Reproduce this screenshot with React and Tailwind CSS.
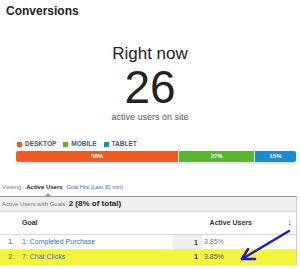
import React from 'react';

const App = () => {
  return (
    <div className="relative w-[300px] h-[269px] overflow-hidden bg-white font-['Liberation_Sans',Arial,sans-serif] text-[#333]">
      <div className="pl-[6px] pt-[4px] text-[12px] leading-[14px] font-bold text-[#222]">Conversions</div>

      <div className="mt-[26px] text-center text-[17px] leading-[20px] text-[#222]">Right now</div>
      <div className="mt-[1px] text-center text-[46px] leading-[44px] text-[#222]">26</div>
      <div className="mt-[3px] text-center text-[9px] leading-[11px] text-[#555]">active users on site</div>

      <div className="mt-[17px] flex items-center gap-[7px] pl-[17px] text-[6.5px] leading-[8px] font-bold text-[#3b5b85]">
        <span className="flex items-center gap-[3px]"><span className="w-[5px] h-[5px] bg-[#ef5b20]" />DESKTOP</span>
        <span className="flex items-center gap-[3px]"><span className="w-[5px] h-[5px] bg-[#5cb531]" />MOBILE</span>
        <span className="flex items-center gap-[3px]"><span className="w-[5px] h-[5px] bg-[#198bd1]" />TABLET</span>
      </div>

      <div className="mt-[3px] ml-[16px] w-[280px] h-[11px] flex rounded-[2px] overflow-hidden shadow-[0_2px_2px_rgba(0,0,0,0.12)] text-[6px] font-bold text-white leading-[11px]">
        <div className="w-[58%] bg-[#ef5b20] text-center">58%</div>
        <div className="w-[27%] bg-[#5cb531] text-center border-l border-[#e8f4e0]">27%</div>
        <div className="w-[15%] bg-[#198bd1] text-center border-l border-white">15%</div>
      </div>

      <div className="mt-[21px] pl-[2px] text-[5.5px] leading-[9px] text-[#777]">
        Viewing: <span className="ml-[2px] text-[6px] font-bold text-[#222]">Active Users</span>
        <span className="ml-[4px] text-[#3a6fb0]">Goal Hits (Last 30 min)</span>
      </div>

      <div className="relative mt-[4px] w-[297px] h-[15px] bg-[#eeeeee] border-t border-[#999] border-r border-r-[#ccc] pl-[2px] text-[6px] leading-[14px] text-[#777]">
        <span className="absolute -top-[4px] left-[44px] w-0 h-0 border-l-[4px] border-r-[4px] border-b-[4px] border-l-transparent border-r-transparent border-b-[#999]" />
        Active Users with Goals: <span className="text-[8px] font-bold text-[#222]">2 (8% of total)</span>
      </div>

      <div className="w-[297px] border-r border-[#ccc] text-[7px]">
        <div className="flex h-[24px] items-center border-t border-b border-[#d8d8d8] font-bold text-[#333]">
          <div className="w-[22px]" />
          <div className="flex-1">Goal</div>
          <div className="w-[79px] text-right">Active Users</div>
          <div className="w-[44px] text-right pr-[4px] text-[9px] font-normal">↓</div>
        </div>
        <div className="flex h-[15px] items-center border-b border-[#e4e4e4]">
          <div className="w-[22px] pr-[8px] text-right text-[#555]">1.</div>
          <div className="flex-1 text-[#3a6fb0]">1: Completed Purchase</div>
          <div className="w-[29px] h-full bg-[#eeeeee] pr-[4px] text-right font-bold leading-[15px] text-[#333]">1</div>
          <div className="w-[94px] pl-[2px] text-[#777]">3.85%</div>
        </div>
        <div className="flex h-[15px] items-center bg-[#f4f43c]">
          <div className="w-[22px] pr-[8px] text-right text-[#555]">2.</div>
          <div className="flex-1 text-[#3a6fb0]">7: Chat Clicks</div>
          <div className="w-[29px] pr-[4px] text-right font-bold text-[#333]">1</div>
          <div className="w-[94px] pl-[2px] text-[#555]">3.85%</div>
        </div>
      </div>

      <svg className="absolute left-0 top-0" width="300" height="269" viewBox="0 0 300 269">
        <g stroke="#1c1ccf" strokeWidth="2.5" strokeLinecap="round" fill="none">
          <path d="M289 231 L242 259" />
          <path d="M242 259 L255 259" />
          <path d="M242 259 L248 249" />
        </g>
      </svg>
    </div>
  );
};

export default App;
